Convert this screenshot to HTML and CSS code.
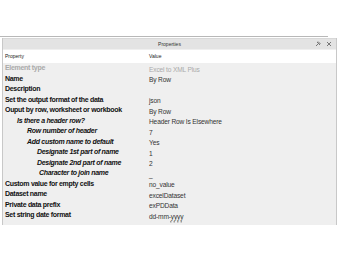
FILE: index.html
```html
<!DOCTYPE html>
<html lang="en">
<head>
    <meta charset="UTF-8">
    <title>Properties</title>
    <link rel="stylesheet" href="styles.css">
</head>
<body>

<div class="top-rule"></div>
<div class="panel">
    <div class="panel-title">
        <span>Properties</span>
        <div class="panel-tools">
            <svg width="6" height="6" viewBox="0 0 6 6"><path d="M1 5 L3 3 M2 1 L5 4 M3 0.5 L5.5 3" stroke="#777" stroke-width="1" fill="none"/></svg>
            <svg width="6" height="6" viewBox="0 0 6 6"><path d="M1 1 L5 5 M5 1 L1 5" stroke="#777" stroke-width="1"/></svg>
        </div>
    </div>
    <div class="grid-head">
        <div>Property</div>
        <div>Value</div>
    </div>
    <div class="grid-body">
        <div class="prop muted">Element type</div><div class="val muted">Excel to XML Plus</div>
        <div class="prop">Name</div><div class="val">By Row</div>
        <div class="prop">Description</div><div class="val"></div>
        <div class="prop">Set the output format of the data</div><div class="val">json</div>
        <div class="prop">Ouput by row, worksheet or workbook</div><div class="val">By Row</div>
        <div class="prop sub lv1">Is there a header row?</div><div class="val">Header Row Is Elsewhere</div>
        <div class="prop sub lv2">Row number of header</div><div class="val">7</div>
        <div class="prop sub lv2">Add custom name to default</div><div class="val">Yes</div>
        <div class="prop sub lv3">Designate 1st part of name</div><div class="val">1</div>
        <div class="prop sub lv3">Designate 2nd part of name</div><div class="val">2</div>
        <div class="prop sub lv3b">Character to join name</div><div class="val">_</div>
        <div class="prop">Custom value for empty cells</div><div class="val">no_value</div>
        <div class="prop">Dataset name</div><div class="val">excelDataset</div>
        <div class="prop">Private data prefix</div><div class="val">exPDData</div>
        <div class="prop">Set string date format</div><div class="val">dd-mm-yyyy</div>
    </div>
    <div class="grip">
        <svg width="12" height="2" viewBox="0 0 12 2">
            <rect x="0" y="0" width="1.5" height="1.5" fill="#999"/>
            <rect x="3.5" y="0" width="1.5" height="1.5" fill="#999"/>
            <rect x="7" y="0" width="1.5" height="1.5" fill="#999"/>
            <rect x="10.5" y="0" width="1.5" height="1.5" fill="#999"/>
        </svg>
    </div>
</div>

</body>
</html>
```

FILE: styles.css
```css
body {
    margin: 0;
    background: #fff;
    font-family: "Liberation Sans", Arial, sans-serif;
    color: #111;
}
.top-rule {
    margin-top: 36px;
    width: 328px;
    height: 1px;
    background: #b8b8b8;
}
.panel {
    margin: 1px 3px 0 2px;
    border-left: 1px solid #c8c8c8;
    border-right: 1px solid #c8c8c8;
    background: #efefef;
}
.panel-title {
    position: relative;
    height: 10px;
    line-height: 10px;
    background: #e3e3e3;
    border-top: 1px solid #d8d8d8;
    text-align: center;
    font-size: 5px;
    color: #333;
}
.panel-tools {
    position: absolute;
    right: 4px;
    top: 2px;
    display: flex;
    gap: 5px;
}
.grid-head {
    display: grid;
    grid-template-columns: 144px 1fr;
    height: 13px;
    line-height: 13px;
    margin-top: 1px;
    background: #fff;
    font-size: 5px;
    color: #222;
}
.grid-head div {
    padding-left: 2px;
}
.grid-body {
    display: grid;
    grid-template-columns: 144px 1fr;
    grid-auto-rows: 10.5px;
}
.prop {
    padding-left: 2px;
    font-weight: bold;
    font-size: 7px;
    letter-spacing: -0.3px;
    line-height: 9px;
    white-space: nowrap;
}
.val {
    padding-left: 2px;
    padding-top: 1.5px;
    font-size: 6.6px;
    letter-spacing: -0.15px;
    line-height: 9px;
    color: #333;
    white-space: nowrap;
}
.muted {
    color: #aaa;
}
.sub {
    font-style: italic;
}
.lv1 {
    padding-left: 14px;
}
.lv2 {
    padding-left: 24px;
}
.lv3 {
    padding-left: 34px;
}
.lv3b {
    padding-left: 36px;
}
.grip {
    display: flex;
    justify-content: center;
    height: 4px;
    padding-left: 12px;
}
```
